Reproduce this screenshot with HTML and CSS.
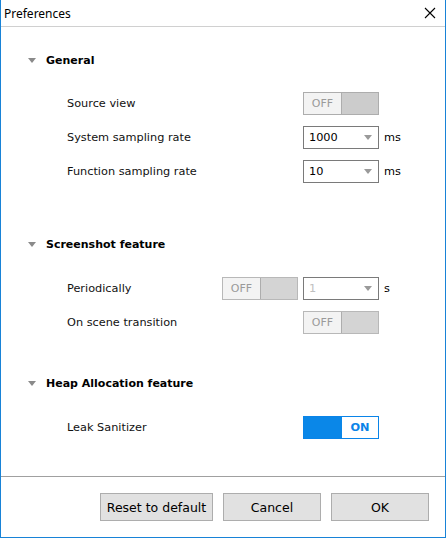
FILE: index.html
```html
<!DOCTYPE html>
<html>
<head>
<meta charset="utf-8">
<link rel="stylesheet" href="styles.css">
</head>
<body>
<div class="window">
  <div class="titlebar">
    <span class="title">Preferences</span>
    <svg class="close" width="12" height="12" viewBox="0 0 12 12"><path d="M1 1 L11 11 M11 1 L1 11" stroke="#000" stroke-width="1.1" fill="none"/></svg>
  </div>
  <div class="content">
    <div class="section s1">
      <div class="header"><span class="tri"></span><span>General</span></div>
      <div class="rows">
        <div class="row">
          <span class="label">Source view</span>
          <span></span>
          <div class="toggle off"><span class="t-off">OFF</span><span class="t-knob"></span></div>
          <span></span>
        </div>
        <div class="row">
          <span class="label">System sampling rate</span>
          <span></span>
          <div class="select"><span>1000</span><span class="arrow"></span></div>
          <span class="unit">ms</span>
        </div>
        <div class="row">
          <span class="label">Function sampling rate</span>
          <span></span>
          <div class="select"><span>10</span><span class="arrow"></span></div>
          <span class="unit">ms</span>
        </div>
      </div>
    </div>
    <div class="section s2">
      <div class="header"><span class="tri"></span><span>Screenshot feature</span></div>
      <div class="rows">
        <div class="row">
          <span class="label">Periodically</span>
          <div class="toggle off dim"><span class="t-off">OFF</span><span class="t-knob"></span></div>
          <div class="select disabled"><span>1</span><span class="arrow"></span></div>
          <span class="unit">s</span>
        </div>
        <div class="row">
          <span class="label">On scene transition</span>
          <span></span>
          <div class="toggle off dim"><span class="t-off">OFF</span><span class="t-knob"></span></div>
          <span></span>
        </div>
      </div>
    </div>
    <div class="section s3">
      <div class="header"><span class="tri"></span><span>Heap Allocation feature</span></div>
      <div class="rows">
        <div class="row">
          <span class="label">Leak Sanitizer</span>
          <span></span>
          <div class="toggle on"><span class="t-fill"></span><span class="t-on">ON</span></div>
          <span></span>
        </div>
      </div>
    </div>
  </div>
  <div class="footer">
    <button class="btn reset">Reset to default</button>
    <button class="btn">Cancel</button>
    <button class="btn">OK</button>
  </div>
</div>
</body>
</html>
```
FILE: styles.css
```css
html, body {
  margin: 0;
  padding: 0;
  background: #fff;
}
.window {
  width: 446px;
  height: 538px;
  box-sizing: border-box;
  border: 1px solid #1883d7;
  border-top: none;
  display: flex;
  flex-direction: column;
  font-family: "DejaVu Sans", Verdana, sans-serif;
  font-size: 11.3px;
  color: #111;
}
.titlebar {
  flex: none;
  display: flex;
  align-items: center;
  justify-content: space-between;
  border-bottom: 1px solid #d0d0d0;
  padding: 0 9px 0 3px;
  box-sizing: border-box;
  height: 27px;
}
.title {
  font-family: "Noto Sans", "Open Sans", sans-serif;
  font-size: 12px;
  color: #000;
}
.close {
  display: block;
}
.content {
  flex: 1;
  padding: 23px 0 0 0;
}
.header {
  height: 20px;
  display: flex;
  align-items: center;
  padding-left: 27px;
  font-weight: bold;
  font-size: 11px;
  color: #000;
}
.tri {
  width: 0;
  height: 0;
  border-left: 4px solid transparent;
  border-right: 4px solid transparent;
  border-top: 5px solid #8a8a8a;
  margin-right: 10px;
}
.rows {
  display: flex;
  flex-direction: column;
  gap: 11px;
  margin-top: 22px;
  padding-left: 66px;
}
.s2 .rows { margin-top: 23px; }
.s3 .rows { margin-top: 23px; }
.s1 { margin-bottom: 51px; }
.s2 { margin-bottom: 39px; }
.row {
  display: grid;
  grid-template-columns: 150px 76px 76px auto;
  column-gap: 5px;
  align-items: center;
  height: 23px;
}
.label { color: #111; }
.unit { color: #000; }
.toggle {
  box-sizing: border-box;
  width: 76px;
  height: 23px;
  display: flex;
  border: 1px solid #adadad;
}
.toggle.off .t-off {
  width: 37px;
  background: #f3f3f3;
  border-right: 1px solid #adadad;
  color: #9a9a9a;
  display: flex;
  align-items: center;
  justify-content: center;
  font-size: 11px;
}
.toggle.off .t-knob {
  flex: 1;
  background: #cccccc;
}
.toggle.dim .t-knob { background: #d4d4d4; }
.toggle.dim { border-color: #b8b8b8; }
.toggle.on {
  border-color: #0a84e8;
  background: #fff;
}
.t-fill {
  width: 38px;
  background: #0a87e8;
}
.t-on {
  flex: 1;
  display: flex;
  align-items: center;
  justify-content: center;
  font-weight: bold;
  color: #0a84e8;
}
.select {
  box-sizing: border-box;
  width: 76px;
  height: 23px;
  border: 1px solid #7a7a7a;
  background: #fff;
  display: flex;
  align-items: center;
  justify-content: space-between;
  padding: 0 6px 0 5px;
  color: #000;
}
.select.disabled { color: #c0c0c0; }
.arrow {
  width: 0;
  height: 0;
  border-left: 4px solid transparent;
  border-right: 4px solid transparent;
  border-top: 5px solid #9a9a9a;
}
.footer {
  flex: none;
  height: 61px;
  border-top: 1px solid #a0a0a0;
  box-sizing: border-box;
  display: flex;
  justify-content: flex-end;
  align-items: flex-start;
  gap: 10px;
  padding: 16px 16px 0 0;
}
.btn {
  box-sizing: border-box;
  width: 98px;
  height: 28px;
  background: #e1e1e1;
  border: 1px solid #adadad;
  font-family: "DejaVu Sans", Tahoma, sans-serif;
  font-size: 12.5px;
  color: #000;
  padding: 0;
  margin: 0;
}
.btn.reset { width: 113px; }
```
